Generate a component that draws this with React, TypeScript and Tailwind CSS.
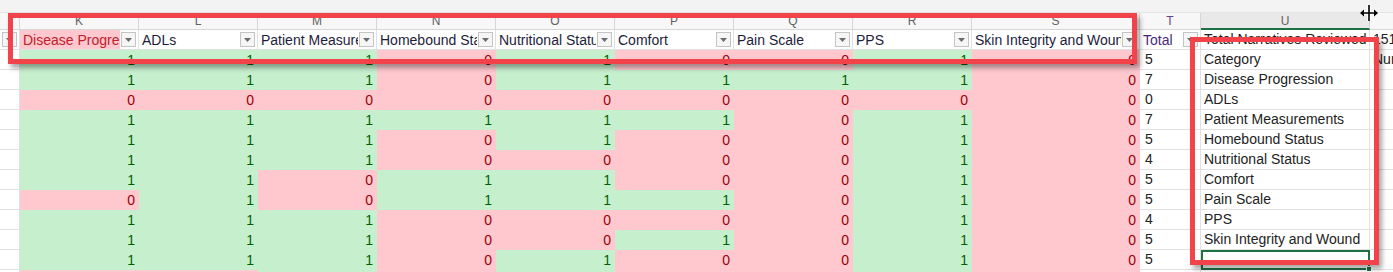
import { ReactNode } from 'react'

type Tone = 'g' | 'r'

// K..S values per row, T is the total
const rows: number[][] = [
  [1, 1, 1, 0, 1, 0, 0, 1, 0],
  [1, 1, 1, 0, 1, 1, 1, 1, 0],
  [0, 0, 0, 0, 0, 0, 0, 0, 0],
  [1, 1, 1, 1, 1, 1, 0, 1, 0],
  [1, 1, 1, 0, 1, 0, 0, 1, 0],
  [1, 1, 1, 0, 0, 0, 0, 1, 0],
  [1, 1, 0, 1, 1, 0, 0, 1, 0],
  [0, 1, 0, 1, 1, 1, 0, 1, 0],
  [1, 1, 1, 0, 0, 0, 0, 1, 0],
  [1, 1, 1, 0, 0, 1, 0, 1, 0],
  [1, 1, 1, 0, 1, 0, 0, 1, 0],
  [0, 0, 1, 0, 1, 0, 0, 1, 0],
]

const headers = [
  'Disease Progres',
  'ADLs',
  'Patient Measure',
  'Homebound Sta',
  'Nutritional Statu',
  'Comfort',
  'Pain Scale',
  'PPS',
  'Skin Integrity and Wound',
]

const categories = [
  'Category',
  'Disease Progression',
  'ADLs',
  'Patient Measurements',
  'Homebound Status',
  'Nutritional Status',
  'Comfort',
  'Pain Scale',
  'PPS',
  'Skin Integrity and Wound',
  '',
  '',
]

const letters = ['K', 'L', 'M', 'N', 'O', 'P', 'Q', 'R', 'S']
const colW = ['w-[119px]', 'w-[119px]', 'w-[119px]', 'w-[119px]', 'w-[119px]', 'w-[119px]', 'w-[119px]', 'w-[119px]', 'w-[168px]']

function Drop() {
  return (
    <span className="absolute right-[2px] top-[2px] w-[15px] h-[15px] border border-[#c4c4c4] bg-[#f6f6f6] flex items-center justify-center">
      <svg width="7" height="4" viewBox="0 0 7 4"><path d="M0 0h7L3.5 4z" fill="#6b6b6b" /></svg>
    </span>
  )
}

function HeadCell({ w, children, pink, color = 'text-[#1d1d3a]' }: { w: string; children?: ReactNode; pink?: boolean; color?: string }) {
  return (
    <div className={`${w} shrink-0 h-[20px] relative border-r border-b border-[#e1e1e1] bg-white leading-[20px] overflow-hidden whitespace-nowrap ${color}`}>
      <span className={`block h-full pl-[3px] mr-[18px] overflow-hidden ${pink ? 'bg-[#ffc7ce] text-[#c0202a]' : ''}`}>{children}</span>
      <Drop />
    </div>
  )
}

function Num({ w, v }: { w: string; v: number }) {
  const tone: Tone = v ? 'g' : 'r'
  return (
    <div className={`${w} shrink-0 h-[20px] text-right pr-[4px] leading-[20px] ${tone === 'g' ? 'bg-[#c6efce] text-[#006100]' : 'bg-[#ffc7ce] text-[#9c0006]'}`}>
      {v}
    </div>
  )
}

function Plain({ w, children, className = '' }: { w: string; children?: ReactNode; className?: string }) {
  return (
    <div className={`${w} shrink-0 h-[20px] bg-white border-r border-b border-[#e1e1e1] pl-[3px] leading-[19px] whitespace-nowrap overflow-hidden text-[#222] ${className}`}>
      {children}
    </div>
  )
}

export default function App() {
  return (
    <div className="relative w-[1393px] h-[272px] overflow-hidden bg-white text-[14px]" style={{ fontFamily: '"Liberation Sans", Arial, sans-serif' }}>
      {/* strip above the column letters */}
      <div className="h-[13px] bg-[#f3f3f3] border-b border-[#e4e4e4]" />

      {/* column letters */}
      <div className="flex h-[17px] bg-[#f7f7f7] text-[12px] text-[#616161] leading-[17px]">
        <div className="w-[20px] shrink-0 border-r border-b border-[#d6d6d6]" />
        {letters.map((l, i) => (
          <div key={l} className={`${colW[i]} shrink-0 text-center border-r border-b border-[#d6d6d6]`}>{l}</div>
        ))}
        <div className="w-[61px] shrink-0 text-center border-r border-b border-[#d6d6d6] text-[#6b3f8c]">T</div>
        <div className="w-[169px] shrink-0 text-center bg-[#e9e9e9] border-r border-[#d6d6d6] border-b-2 border-b-[#1e7145]">U</div>
        <div className="flex-1 border-b border-[#d6d6d6]" />
      </div>

      {/* header row */}
      <div className="flex">
        <HeadCell w="w-[20px]" />
        {headers.map((h, i) => (
          <HeadCell key={h} w={colW[i]} pink={i === 0}>{h}</HeadCell>
        ))}
        <HeadCell w="w-[61px]" color="text-[#4a2a78]">Total</HeadCell>
        <Plain w="w-[169px]">Total Narratives Reviewed</Plain>
        <Plain w="flex-1" className="!border-r-0">151</Plain>
      </div>

      {/* data rows */}
      {rows.map((r, ri) => (
        <div key={ri} className="flex">
          <Plain w="w-[20px]" />
          {r.map((v, ci) => (
            <Num key={ci} w={colW[ci]} v={v} />
          ))}
          <Plain w="w-[61px]" className="!pl-[5px]">{r.reduce((a, b) => a + b, 0)}</Plain>
          {ri === 10 ? (
            <div className="w-[169px] shrink-0 h-[20px] relative bg-white border-2 border-[#1e7145]">
              <span className="absolute -right-[4px] -bottom-[4px] w-[6px] h-[6px] bg-[#1e7145] border border-white" />
            </div>
          ) : (
            <Plain w="w-[169px]">{categories[ri]}</Plain>
          )}
          <Plain w="flex-1" className="!border-r-0">{ri === 0 ? 'Nur' : ''}</Plain>
        </div>
      ))}

      {/* annotation boxes */}
      <div className="absolute left-[8px] top-[13px] w-[1129px] h-[51px] border-[5px] border-[#f2434a] shadow-[3px_4px_5px_rgba(0,0,0,0.35)]" />
      <div className="absolute left-[1190px] top-[37px] w-[189px] h-[228px] border-[5px] border-[#f2434a] shadow-[3px_4px_5px_rgba(0,0,0,0.35)]" />

      {/* column resize cursor */}
      <svg className="absolute left-[1359px] top-[4px]" width="20" height="18" viewBox="0 0 20 18">
        <g stroke="#fff" strokeWidth="3.5" fill="none">
          <path d="M10 1v16M2 9h16" />
        </g>
        <g stroke="#000" strokeWidth="1.6" fill="none">
          <path d="M10 1v16M2 9h16" />
        </g>
        <path d="M1 9l4-3.5v7z M19 9l-4-3.5v7z" fill="#000" />
      </svg>
    </div>
  )
}
